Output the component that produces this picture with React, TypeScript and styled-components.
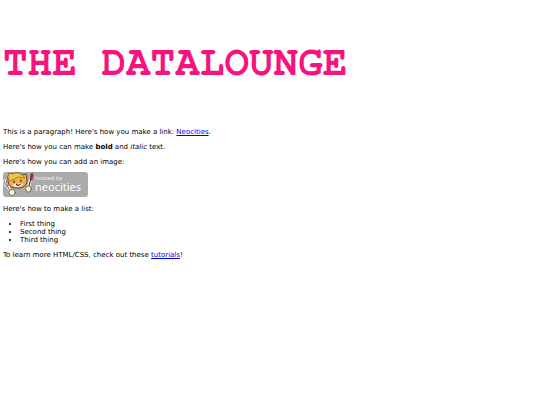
import React from "react";
import styled, { createGlobalStyle } from "styled-components";

const GlobalStyle = createGlobalStyle`
  body {
    margin: 0 3px;
    background: #fff;
    color: #000;
    font: 7px/8px "DejaVu Sans", Verdana, sans-serif;
  }
`;

const Title = styled.h1`
  margin: 42px 0 44px;
  color: #f5147d;
  font: bold 41px/42px "FreeMono", "Nimbus Mono PS", "Courier 10 Pitch", "Liberation Mono", monospace;
  white-space: nowrap;
`;

const Paragraph = styled.p`
  margin: 0 0 7px;
`;

const Figure = styled.figure`
  margin: -1px 0 8px;
`;

const Link = styled.a`
  color: #0000ee;
`;

const List = styled.ul`
  margin: 0 0 7px;
  padding-left: 17px;
`;

const Badge = styled.svg`
  display: block;
  width: 85px;
  height: 25px;
`;

const HostedBy = styled.text`
  fill: #eee;
  font: 6px "Noto Sans", sans-serif;
`;

const Brand = styled.text`
  fill: #fff;
  font: 11px "Noto Sans", sans-serif;
`;

function NeocitiesBadge() {
  return (
    <Badge viewBox="0 0 85 25" role="img" aria-label="Hosted by Neocities">
      <rect width="85" height="25" rx="3" fill="#aaa" />
      <g strokeLinecap="round" strokeLinejoin="round">
        <path d="M1.5 9l1 4 2 1.5 2-1.5-1-4M3.5 8.5l1 6L8 20" fill="none" stroke="#fff" strokeWidth="2.4" />
        <path d="M1.5 9l1 4 2 1.5 2-1.5-1-4M3.5 8.5l1 6L8 20" fill="none" stroke="#666" strokeWidth="1" />
        <path d="M5 5L6 1l4 1q5-3 9 1l4-1 1 5q1 8-8 9-10 1-11-6z" fill="#f6ad4b" stroke="#59432f" />
        <path d="M5 5l1-4 4 1q5-3 9 1l3 3-7-1-8 4z" fill="#efc544" stroke="#8a6623" strokeWidth=".6" />
        <path d="M10 13q2-2 4-1l3-1 3 1q-1 3-5 3-4 0-5-2z" fill="#fff4e4" />
        <path d="M11 9v1.5M18 8v1.5M13.5 12.5q2 2 4-.5" fill="none" stroke="#38291f" strokeWidth="1.2" />
        <path d="M25 17l3-11" stroke="#fff" strokeWidth="3" />
        <path d="M25 17l3-10" stroke="#544039" strokeWidth="1.2" />
        <path d="M27 7l1-5 1.5-1 .5 3-1 4z" fill="#b4202c" stroke="#702025" strokeWidth=".6" />
        <ellipse cx="9" cy="20.5" rx="3.2" ry="2.9" fill="#fffdf4" stroke="#6b5138" strokeWidth=".8" />
        <ellipse cx="25.5" cy="17" rx="2.8" ry="3" fill="#fff3d7" stroke="#6b5138" strokeWidth=".8" />
      </g>
      <HostedBy x="32" y="8">hosted by</HostedBy>
      <Brand x="32" y="19">neocities</Brand>
    </Badge>
  );
}

export default function App() {
  return (
    <main>
      <GlobalStyle />
      <Title>THE DATALOUNGE</Title>
      <Paragraph>
        This is a paragraph! Here's how you make a link: <Link href="#neocities">Neocities</Link>.
      </Paragraph>
      <Paragraph>
        Here's how you can make <strong>bold</strong> and <em>italic</em> text.
      </Paragraph>
      <Paragraph>Here's how you can add an image:</Paragraph>
      <Figure>
        <NeocitiesBadge />
      </Figure>
      <Paragraph>Here's how to make a list:</Paragraph>
      <List>
        <li>First thing</li>
        <li>Second thing</li>
        <li>Third thing</li>
      </List>
      <Paragraph>
        To learn more HTML/CSS, check out these <Link href="#tutorials">tutorials</Link>!
      </Paragraph>
    </main>
  );
}
